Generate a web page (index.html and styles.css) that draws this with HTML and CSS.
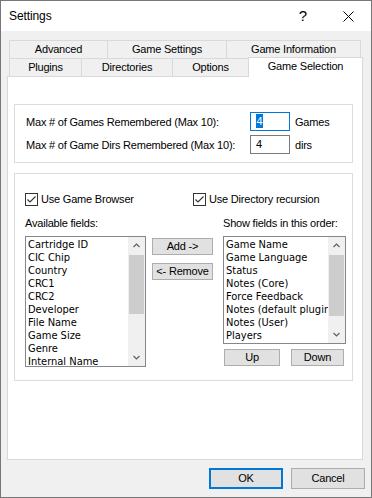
FILE: index.html
```html
<!DOCTYPE html>
<html>
<head>
<meta charset="utf-8">
<link rel="stylesheet" href="styles.css">
</head>
<body>
<div class="window">
  <div class="titlebar">
    <span class="title">Settings</span>
    <span class="help">?</span>
    <svg class="close" width="11" height="11" viewBox="0 0 11 11"><path d="M0.5 0.5L10.5 10.5M10.5 0.5L0.5 10.5" stroke="#000" stroke-width="1" fill="none"/></svg>
  </div>
  <div class="client">
    <div class="tabs">
      <div class="tabrow">
        <div class="tab t-adv">Advanced</div>
        <div class="tab t-gset">Game Settings</div>
        <div class="tab t-ginfo last">Game Information</div>
      </div>
      <div class="tabrow">
        <div class="tab t-plug">Plugins</div>
        <div class="tab t-dir">Directories</div>
        <div class="tab t-opt">Options</div>
        <div class="tab t-gsel sel">Game Selection</div>
      </div>
    </div>
    <div class="panel">
      <div class="group g1">
        <span class="lbl">Max # of Games Remembered (Max 10):</span>
        <span class="input focus"><span class="hl">4</span></span>
        <span class="unit">Games</span>
        <span class="lbl">Max # of Game Dirs Remembered (Max 10):</span>
        <span class="input">4</span>
        <span class="unit">dirs</span>
      </div>
      <div class="group g2">
        <div class="chkrow">
          <label class="chk first"><svg class="box" width="13" height="13" viewBox="0 0 13 13"><rect x="0.5" y="0.5" width="12" height="12" fill="#fff" stroke="#333"/><polyline points="2.5,6.5 5,9 10.5,3.5" fill="none" stroke="#333" stroke-width="1.1"/></svg><span>Use Game Browser</span></label>
          <label class="chk"><svg class="box" width="13" height="13" viewBox="0 0 13 13"><rect x="0.5" y="0.5" width="12" height="12" fill="#fff" stroke="#333"/><polyline points="2.5,6.5 5,9 10.5,3.5" fill="none" stroke="#333" stroke-width="1.1"/></svg><span>Use Directory recursion</span></label>
        </div>
        <div class="cols">
          <div class="col-left">
            <div class="collbl">Available fields:</div>
            <div class="list list-left">
              <div class="items">
                <div>Cartridge ID</div>
                <div>CIC Chip</div>
                <div>Country</div>
                <div>CRC1</div>
                <div>CRC2</div>
                <div>Developer</div>
                <div>File Name</div>
                <div>Game Size</div>
                <div>Genre</div>
                <div>Internal Name</div>
              </div>
              <div class="sbar">
                <div class="arrow"><svg width="7" height="5" viewBox="0 0 7 5"><polyline points="0.5,4 3.5,1 6.5,4" fill="none" stroke="#606060" stroke-width="1.2"/></svg></div>
                <div class="track"><div class="thumb thumb-left"></div></div>
                <div class="arrow"><svg width="7" height="5" viewBox="0 0 7 5"><polyline points="0.5,1 3.5,4 6.5,1" fill="none" stroke="#606060" stroke-width="1.2"/></svg></div>
              </div>
            </div>
          </div>
          <div class="col-mid">
            <div class="btn btn-mid">Add -&gt;</div>
            <div class="btn btn-mid">&lt;- Remove</div>
          </div>
          <div class="col-right">
            <div class="collbl">Show fields in this order:</div>
            <div class="list list-right">
              <div class="items">
                <div>Game Name</div>
                <div>Game Language</div>
                <div>Status</div>
                <div>Notes (Core)</div>
                <div>Force Feedback</div>
                <div>Notes (default plugins)</div>
                <div>Notes (User)</div>
                <div>Players</div>
              </div>
              <div class="sbar">
                <div class="arrow"><svg width="7" height="5" viewBox="0 0 7 5"><polyline points="0.5,4 3.5,1 6.5,4" fill="none" stroke="#606060" stroke-width="1.2"/></svg></div>
                <div class="track"><div class="thumb thumb-right"></div></div>
                <div class="arrow"><svg width="7" height="5" viewBox="0 0 7 5"><polyline points="0.5,1 3.5,4 6.5,1" fill="none" stroke="#606060" stroke-width="1.2"/></svg></div>
              </div>
            </div>
            <div class="btnrow">
              <div class="btn btn-up">Up</div>
              <div class="btn btn-down">Down</div>
            </div>
          </div>
        </div>
      </div>
    </div>
    <div class="footer">
      <div class="fbtn ok">OK</div>
      <div class="fbtn">Cancel</div>
    </div>
  </div>
</div>
</body>
</html>
```

FILE: styles.css
```css
* { box-sizing: border-box; }
body {
  margin: 0;
  font-family: "Liberation Sans", Arial, sans-serif;
  font-size: 11px;
  letter-spacing: -0.2px;
  color: #000;
}
.window {
  width: 372px;
  height: 498px;
  border: 1px solid #777;
  background: #f0f0f0;
  display: flex;
  flex-direction: column;
}
.titlebar {
  height: 30px;
  flex: none;
  background: #fff;
  display: flex;
  align-items: center;
  padding-left: 8px;
}
.title { flex: 1; font-size: 12px; letter-spacing: -0.1px; }
.help { font-size: 15px; margin-right: 36px; margin-top: -1px; }
.close { margin-right: 17px; display: block; }

.client {
  padding: 9px 6px 0 6px;
  display: flex;
  flex-direction: column;
}
.tabs {
  margin-left: 2px;
  height: 36px;
  display: flex;
  flex-direction: column;
}
.tabrow { display: flex; height: 18px; }
.tab {
  height: 18px;
  border-top: 1px solid #d9d9d9;
  border-left: 1px solid #d9d9d9;
  background: #f0f0f0;
  display: flex;
  align-items: center;
  justify-content: center;
  line-height: 15px;
  white-space: nowrap;
}
.tab.last { border-right: 1px solid #d9d9d9; }
.tab.sel {
  background: #fff;
  height: 20px;
  margin-top: -1px;
  padding-bottom: 3px;
  border-right: 1px solid #d9d9d9;
  position: relative;
  z-index: 1;
}
.t-adv { width: 98px; }
.t-gset { width: 119px; }
.t-ginfo { width: 135px; }
.t-plug { width: 72px; }
.t-dir { width: 91px; }
.t-opt { width: 76px; }
.t-gsel { width: 115px; }

.panel {
  width: 356px;
  height: 384px;
  border: 1px solid #d9d9d9;
  background: #fff;
  padding: 27px 0 0 6px;
}
.group {
  width: 339px;
  border: 1px solid #dcdcdc;
}
.g1 {
  height: 59px;
  padding: 7px 0 0 11px;
  display: grid;
  grid-template-columns: 224px 40px auto;
  grid-auto-rows: 19px;
  align-content: start;
  row-gap: 4px;
  align-items: center;
}
.lbl { white-space: nowrap; }
.input {
  height: 19px;
  border: 1px solid #7a7a7a;
  padding-left: 5px;
  line-height: 17px;
}
.input.focus { border-color: #0078d7; }
.hl {
  background: #0078d7;
  color: #fff;
  display: inline-block;
  line-height: 14px;
  padding: 0 0.5px;
}
.unit { margin-left: 5px; }

.g2 {
  margin-top: 10px;
  height: 208px;
  padding: 19px 0 0 10px;
}
.chkrow { display: flex; height: 13px; align-items: center; }
.chk { display: flex; align-items: center; gap: 3px; line-height: 13px; white-space: nowrap; }
.chk.first { width: 168px; }
.box { display: block; flex: none; }

.cols { display: flex; margin-top: 10px; }
.col-left { width: 121px; }
.col-mid {
  width: 61px;
  margin-left: 6px;
  padding-top: 22px;
  display: flex;
  flex-direction: column;
  gap: 8px;
}
.col-right { width: 123px; margin-left: 10px; }
.collbl { line-height: 15px; height: 15px; margin-bottom: 5px; white-space: nowrap; }

.list {
  border: 1px solid #828790;
  background: #fff;
  display: flex;
  overflow: hidden;
}
.list-left { height: 131px; }
.list-right { height: 108px; }
.items {
  flex: 1;
  min-width: 0;
  padding: 1px 0 0 2px;
  font-family: "DejaVu Sans", sans-serif;
  font-stretch: condensed;
  font-size: 11px;
  letter-spacing: 0;
  line-height: 13px;
  overflow: hidden;
  white-space: nowrap;
}
.sbar {
  width: 17px;
  flex: none;
  background: #f0f0f0;
  display: flex;
  flex-direction: column;
}
.arrow {
  height: 17px;
  flex: none;
  display: flex;
  align-items: center;
  justify-content: center;
}
.arrow svg { display: block; }
.track { flex: 1; padding: 1px 1px 0 1px; }
.thumb { background: #cdcdcd; }
.thumb-left { height: 59px; }
.thumb-right { height: 61px; }

.btn {
  height: 17px;
  border: 1px solid #adadad;
  background: #e1e1e1;
  text-align: center;
  line-height: 15px;
  white-space: nowrap;
}
.btnrow { display: flex; margin-top: 5px; }
.btn-up { width: 56px; margin-left: 1px; }
.btn-down { width: 53px; margin-left: 11px; }

.footer {
  display: flex;
  justify-content: flex-end;
  gap: 8px;
  margin-top: 8px;
}
.fbtn {
  width: 74px;
  height: 21px;
  border: 1px solid #adadad;
  background: #e1e1e1;
  text-align: center;
  line-height: 19px;
}
.fbtn.ok { border: 2px solid #0078d7; line-height: 17px; }
```
